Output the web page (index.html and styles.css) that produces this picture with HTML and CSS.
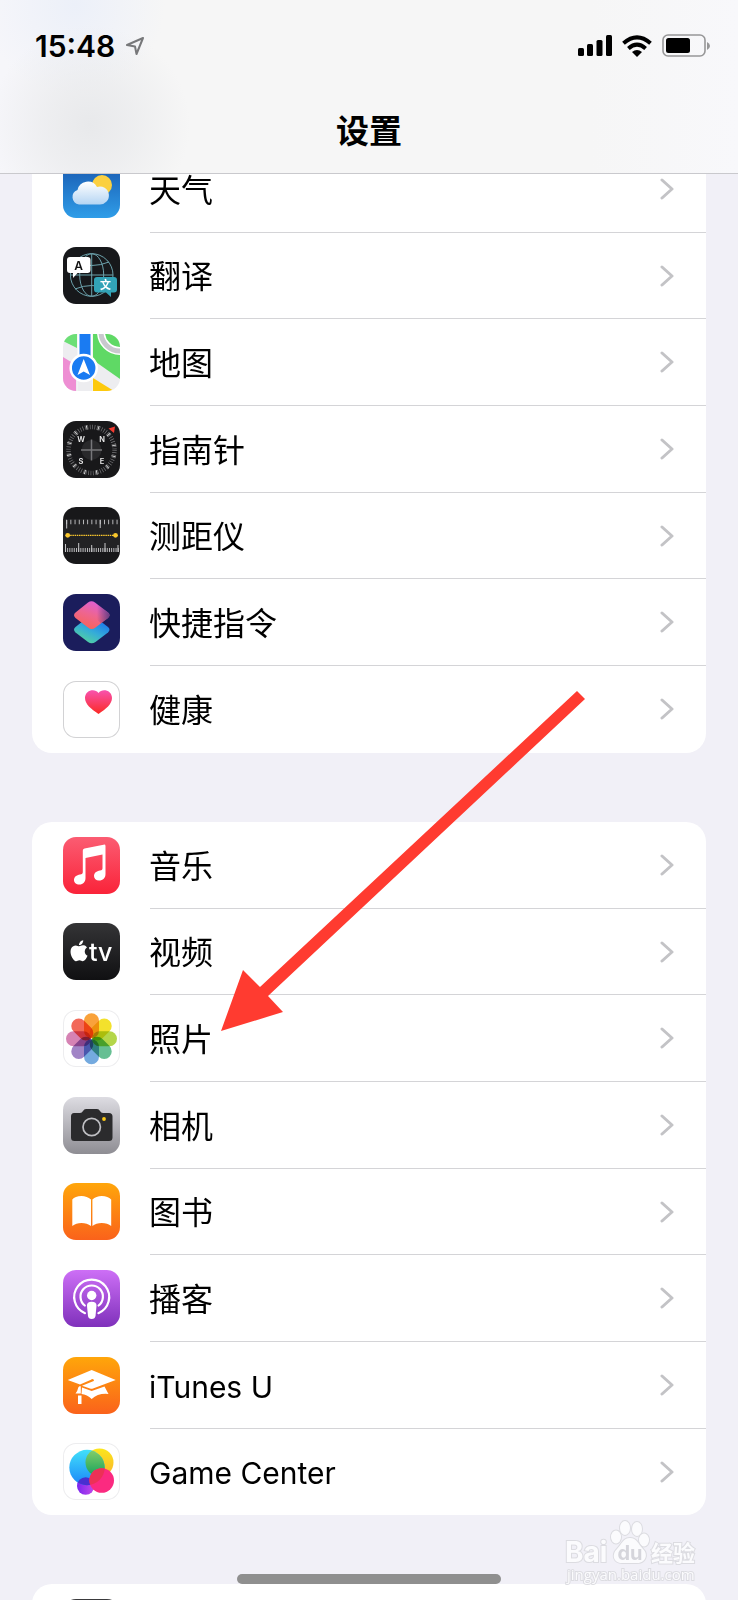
FILE: index.html
```html
<!DOCTYPE html>
<html lang="zh-CN">
<head>
  <meta charset="UTF-8">
  <meta name="viewport" content="width=device-width, initial-scale=1.0">
  <title>设置</title>
  <link rel="stylesheet" href="styles.css">
</head>
<body>
  <header class="header">
    <div class="status-bar">
      <div class="status-left">
        <span class="time">15:48</span>
        <svg width="20" height="20" viewBox="0 0 20 20" fill="none" stroke="#77787a" stroke-width="2" stroke-linejoin="round"><path d="M18 2 L2 9 L10 10.500 L11.500 18 Z"/></svg>
      </div>
      <div class="status-right">
        <svg width="34" height="22" viewBox="0 0 34 22"><rect x="0" y="13" width="6" height="8" rx="1.500"/><rect x="9" y="9" width="6" height="12" rx="1.500"/><rect x="18.500" y="5" width="6" height="16" rx="1.500"/><rect x="28" y="0" width="6" height="21" rx="1.500"/></svg>
        <svg width="30" height="22" viewBox="0 0 30 22"><g fill="none" stroke="#000" stroke-width="4"><path d="M1.500 8.200 Q15 -3.600 28.500 8.200"/><path d="M6.400 13.400 Q15 5.800 23.600 13.400"/></g><path d="M10 17 Q15 13 20 17 L15 22 Z"/></svg>
        <svg width="48" height="24" viewBox="0 0 48 24"><rect x="1" y="1" width="42" height="21" rx="5" fill="none" stroke="#979798" stroke-width="1.600"/><rect x="4" y="4" width="24" height="15" rx="2.500"/><path d="M45 8 Q48 9.500 48 12 Q48 14.500 45 16 Z" fill="#979798"/></svg>
      </div>
    </div>
    <h1>设置</h1>
  </header>

  <main class="settings">
    <nav class="group group-top">
      <a class="row" href="#">
        <svg class="icon" viewBox="0 0 57 57">
          <defs>
            <linearGradient id="sky" x2="0" y2="1"><stop offset="0" stop-color="#1857ae"/><stop offset="1" stop-color="#2f9de8"/></linearGradient>
            <linearGradient id="cloud" x2="0" y2="1"><stop offset="0" stop-color="#fff"/><stop offset="1" stop-color="#b5d5f3"/></linearGradient>
          </defs>
          <rect width="57" height="57" fill="url(#sky)"/>
          <circle cx="39" cy="24" r="10" fill="#fbd041"/>
          <path fill="url(#cloud)" d="M16 43.500 A7.500 7.500 0 0 1 14.500 29 A10.500 10.500 0 0 1 34 26 A9 9 0 1 1 36.500 43.500 Z"/>
        </svg>
        <span class="label">天气</span>
        <svg class="chevron" viewBox="0 0 14 22"><path d="M2 2 L12 11 L2 20"/></svg>
      </a>
      <a class="row" href="#">
        <svg class="icon" viewBox="0 0 57 57">
          <rect width="57" height="57" fill="#17181b"/>
          <g fill="none" stroke="#6da3ad" stroke-width="1">
            <circle cx="28.700" cy="28" r="21.300"/><ellipse cx="28.700" cy="28" rx="12" ry="21.300"/>
            <path d="M28.700 7 V49 M7.500 28 H50 M12 15 Q28.700 22 46 15 M12 42 Q28.700 35 46 42"/>
          </g>
          <path fill="#fff" d="M7 10 H24.500 Q27.500 10 27.500 13 V23 Q27.500 26 24.500 26 H14.500 L10 31 V26 H7 Q4 26 4 23 V13 Q4 10 7 10 Z"/>
          <path fill="#32a3b7" d="M34 30 H51 Q54 30 54 33 V42.500 Q54 45.500 51 45.500 H48 V50 L43 45.500 H34 Q31 45.500 31 42.500 V33 Q31 30 34 30 Z"/>
          <text class="glyph" x="15.500" y="22.500" font-size="12" fill="#111">A</text>
          <text class="glyph" x="42.500" y="42" font-size="11" fill="#fff">文</text>
        </svg>
        <span class="label">翻译</span>
        <svg class="chevron" viewBox="0 0 14 22"><path d="M2 2 L12 11 L2 20"/></svg>
      </a>
      <a class="row" href="#">
        <svg class="icon" viewBox="0 0 57 57">
          <rect width="57" height="57" fill="#ededf0"/>
          <path fill="#6cdf76" d="M0 0 H14 V14 L0 7 Z"/>
          <path fill="#5fd965" d="M30 0 H57 V45 L30 26 Z"/>
          <circle cx="57" cy="-2" r="19" fill="none" stroke="#fff" stroke-width="8"/>
          <circle cx="57" cy="-2" r="19" fill="none" stroke="#c9c9ce" stroke-width="5"/>
          <path fill="#ee8ed3" d="M0 23 L13 31 V57 H0 Z"/>
          <path fill="#fdc90d" d="M30 44 L51 57 H30 Z"/>
          <path fill="#fff" d="M14.500 0 H29.500 V57 H14.500 Z"/>
          <path fill="#ededf0" d="M14.500 34 H29.500 V57 H14.500 Z"/>
          <path fill="#1a7bf2" d="M16.500 0 H27.500 V30 H16.500 Z"/>
          <circle cx="20.700" cy="34" r="13" fill="#1a7bf2" stroke="#fff" stroke-width="2.500"/>
          <path fill="#fff" d="M20.700 25 L27 41 L20.700 37.500 L14.500 41 Z"/>
        </svg>
        <span class="label">地图</span>
        <svg class="chevron" viewBox="0 0 14 22"><path d="M2 2 L12 11 L2 20"/></svg>
      </a>
      <a class="row" href="#">
        <svg class="icon" viewBox="0 0 57 57">
          <rect width="57" height="57" fill="#18181a"/>
          <circle cx="28.500" cy="29" r="23" fill="none" stroke="#77777a" stroke-width="4.500" stroke-dasharray="0.700 1.709"/>
          <circle cx="28.500" cy="29" r="23" fill="none" stroke="#ddd" stroke-width="4.500" stroke-dasharray="0.900 11.143" stroke-dashoffset="-6"/>
          <circle cx="28.500" cy="29" r="10" fill="#29292b"/>
          <path d="M28.500 18.500 V39.500 M18 29 H39" stroke="#77777a" stroke-width="1.500"/>
          <path fill="#f63b30" d="M45.500 7.500 L52 5.500 L51 12 Z"/>
          <g class="glyph" font-size="7.500" fill="#eee"><text x="18" y="21">W</text><text x="39" y="21">N</text><text x="18" y="43">S</text><text x="39" y="43">E</text></g>
        </svg>
        <span class="label">指南针</span>
        <svg class="chevron" viewBox="0 0 14 22"><path d="M2 2 L12 11 L2 20"/></svg>
      </a>
      <a class="row" href="#">
        <svg class="icon" viewBox="0 0 57 57">
          <rect width="57" height="57" fill="#18181a"/>
          <rect y="12" width="57" height="33" fill="#222224"/>
          <g fill="none" stroke="#c9c9cb">
            <path stroke-width="4.500" stroke-dasharray="0.900 3.300" d="M3.200 15 H56"/>
            <path stroke-width="1" d="M3.700 13 V21.500 M37.200 13 V21"/>
            <path stroke-width="4" stroke-dasharray="0.900 1.300" d="M2 43 H56"/>
            <path stroke-width="1" d="M2.500 37 V45 M15.700 36 V45 M28.700 38 V45 M42 36 V45 M55 38 V45"/>
          </g>
          <path d="M5 28.300 H52" stroke="#fbc82d" stroke-width="1.300" stroke-dasharray="1.500 0.700"/>
          <circle cx="4.700" cy="28.300" r="2.400" fill="#fbc82d"/><circle cx="52.500" cy="28.300" r="2.400" fill="#fbc82d"/>
        </svg>
        <span class="label">测距仪</span>
        <svg class="chevron" viewBox="0 0 14 22"><path d="M2 2 L12 11 L2 20"/></svg>
      </a>
      <a class="row" href="#">
        <svg class="icon" viewBox="0 0 57 57">
          <defs>
            <linearGradient id="cutTop" x1="0.200" y1="0.900" x2="0.600" y2="0"><stop offset="0" stop-color="#f8635a"/><stop offset="0.500" stop-color="#ee6590"/><stop offset="1" stop-color="#dc5fd5"/></linearGradient>
            <linearGradient id="cutShade" x1="0.300" x2="1"><stop offset="0" stop-color="#5a3a80" stop-opacity="0"/><stop offset="1" stop-color="#5a3a80" stop-opacity="0.900"/></linearGradient>
            <linearGradient id="cutBottom" x1="0.300" y1="1" x2="0.800" y2="0.200"><stop offset="0" stop-color="#55d39d"/><stop offset="0.500" stop-color="#35acd8"/><stop offset="1" stop-color="#1b78ee"/></linearGradient>
          </defs>
          <rect width="57" height="57" fill="#1b1d5c"/>
          <path fill="url(#cutBottom)" d="M12.500 33 L25 23 Q28.500 20.500 32 23 L45 33 Q48 35.500 45 38.500 L32.500 48 Q28.500 50.500 25 48 L12.500 38.500 Q9.500 35.500 12.500 33 Z"/>
          <path fill="url(#cutTop)" d="M12.500 18.500 L25 8.500 Q28.500 6 32 8.500 L45 18.500 Q48 21 45 24 L32.500 33.500 Q28.500 36.500 25 33.500 L12.500 24 Q9.500 21 12.500 18.500 Z"/>
          <path fill="url(#cutShade)" d="M32 8.500 L45 18.500 Q48 21 45 24 L38 29.300 L28.500 21 Z"/>
        </svg>
        <span class="label">快捷指令</span>
        <svg class="chevron" viewBox="0 0 14 22"><path d="M2 2 L12 11 L2 20"/></svg>
      </a>
      <a class="row" href="#">
        <svg class="icon icon-outlined" viewBox="0 0 57 57">
          <defs><linearGradient id="heart" x2="0" y2="1"><stop offset="0" stop-color="#f852ae"/><stop offset="1" stop-color="#fb2a24"/></linearGradient></defs>
          <path fill="url(#heart)" d="M35.500 33 C28 28 22 23 22 17 C22 9 32 7 35.500 12 C39 7 49 9 49 17 C49 23 43 28 35.500 33 Z"/>
        </svg>
        <span class="label">健康</span>
        <svg class="chevron" viewBox="0 0 14 22"><path d="M2 2 L12 11 L2 20"/></svg>
      </a>
    </nav>

    <nav class="group">
      <a class="row" href="#">
        <svg class="icon" viewBox="0 0 57 57">
          <defs><linearGradient id="music" x2="0" y2="1"><stop offset="0" stop-color="#fb5c72"/><stop offset="1" stop-color="#fa2339"/></linearGradient></defs>
          <rect width="57" height="57" fill="url(#music)"/>
          <path fill="#fff" d="M42.500 9 V37 C42.500 41 40 43.500 36 43.500 C33 43.500 31 41.500 31 39 C31 36 33.500 34 37 33.500 C39 33.200 39.500 32.500 39.500 31 V17.500 L22.500 21 V41 C22.500 45 20 47.500 16.500 47.500 C13 47.500 11 45.500 11 43 C11 40 13.500 38 17 37.500 C19 37.200 19.800 36.500 19.800 35 V13.500 Q19.800 12 21.500 11.500 L40.500 7.700 Q42.500 7.200 42.500 9 Z"/>
        </svg>
        <span class="label">音乐</span>
        <svg class="chevron" viewBox="0 0 14 22"><path d="M2 2 L12 11 L2 20"/></svg>
      </a>
      <a class="row" href="#">
        <svg class="icon" viewBox="0 0 57 57">
          <defs><linearGradient id="tv" x2="0" y2="1"><stop offset="0" stop-color="#343436"/><stop offset="1" stop-color="#101012"/></linearGradient></defs>
          <rect width="57" height="57" fill="url(#tv)"/>
          <path fill="#fff" transform="translate(5.600 17.300) scale(0.870)" d="M12.152 6.896c-.948 0-2.415-1.078-3.960-1.040-2.040.027-3.910 1.183-4.961 3.014-2.117 3.675-.546 9.103 1.519 12.090 1.013 1.454 2.208 3.090 3.792 3.039 1.520-.065 2.090-.987 3.935-.987 1.831 0 2.350.987 3.960.948 1.637-.026 2.676-1.480 3.676-2.948 1.156-1.688 1.636-3.325 1.662-3.415-.039-.013-3.182-1.221-3.220-4.857-.026-3.040 2.480-4.494 2.597-4.559-1.429-2.090-3.623-2.324-4.390-2.376-2-.156-3.675 1.090-4.610 1.090zM15.530 3.830c.843-1.012 1.400-2.427 1.245-3.830-1.207.052-2.662.805-3.532 1.818-.780.896-1.454 2.338-1.273 3.714 1.338.104 2.715-.688 3.559-1.701"/>
          <text class="tv-text" x="26" y="37.500">tv</text>
        </svg>
        <span class="label">视频</span>
        <svg class="chevron" viewBox="0 0 14 22"><path d="M2 2 L12 11 L2 20"/></svg>
      </a>
      <a class="row" href="#">
        <svg class="icon icon-light" viewBox="0 0 57 57">
          <g class="petals" transform="translate(28.500 28.700)">
            <rect x="-7.500" y="-25.500" width="15" height="25" rx="7.500" fill="#f9a23b"/>
            <rect x="-7.500" y="-25.500" width="15" height="25" rx="7.500" fill="#f3e12c" transform="rotate(45)"/>
            <rect x="-7.500" y="-25.500" width="15" height="25" rx="7.500" fill="#b4d64a" transform="rotate(90)"/>
            <rect x="-7.500" y="-25.500" width="15" height="25" rx="7.500" fill="#66bf93" transform="rotate(135)"/>
            <rect x="-7.500" y="-25.500" width="15" height="25" rx="7.500" fill="#74aadf" transform="rotate(180)"/>
            <rect x="-7.500" y="-25.500" width="15" height="25" rx="7.500" fill="#a184c6" transform="rotate(225)"/>
            <rect x="-7.500" y="-25.500" width="15" height="25" rx="7.500" fill="#d683b4" transform="rotate(270)"/>
            <rect x="-7.500" y="-25.500" width="15" height="25" rx="7.500" fill="#f2695a" transform="rotate(315)"/>
          </g>
        </svg>
        <span class="label">照片</span>
        <svg class="chevron" viewBox="0 0 14 22"><path d="M2 2 L12 11 L2 20"/></svg>
      </a>
      <a class="row" href="#">
        <svg class="icon" viewBox="0 0 57 57">
          <defs><linearGradient id="camera" x2="0" y2="1"><stop offset="0" stop-color="#dddce2"/><stop offset="1" stop-color="#8e8d93"/></linearGradient></defs>
          <rect width="57" height="57" fill="url(#camera)"/>
          <path fill="#2b2b2d" d="M11 16 H17 Q19 16 20 14 Q21 12 23 12 H34 Q36 12 37 14 Q38 16 40 16 H46 Q49.500 16 49.500 19.500 V40.500 Q49.500 44 46 44 H11.500 Q8 44 8 40.500 V19.500 Q8 16 11 16 Z"/>
          <circle cx="28.700" cy="30" r="8.700" fill="none" stroke="#bfbfc3" stroke-width="1.700"/>
          <circle cx="41" cy="22" r="1.900" fill="#fcc914"/>
        </svg>
        <span class="label">相机</span>
        <svg class="chevron" viewBox="0 0 14 22"><path d="M2 2 L12 11 L2 20"/></svg>
      </a>
      <a class="row" href="#">
        <svg class="icon" viewBox="0 0 57 57">
          <defs><linearGradient id="orange" x2="0" y2="1"><stop offset="0" stop-color="#ffa60a"/><stop offset="1" stop-color="#fa621b"/></linearGradient></defs>
          <rect width="57" height="57" fill="url(#orange)"/>
          <path fill="#fff" d="M28 16.500 Q24 13 18.500 13 Q12 13 9.300 16.500 V43 Q13 40 18.500 40 Q24 40 28 43 Z M29.400 16.500 Q33 13 38.800 13 Q45 13 48.200 16.500 V43 Q44.500 40 38.800 40 Q33 40 29.400 43 Z"/>
        </svg>
        <span class="label">图书</span>
        <svg class="chevron" viewBox="0 0 14 22"><path d="M2 2 L12 11 L2 20"/></svg>
      </a>
      <a class="row" href="#">
        <svg class="icon" viewBox="0 0 57 57">
          <defs><linearGradient id="podcast" x2="0" y2="1"><stop offset="0" stop-color="#cd6ff6"/><stop offset="1" stop-color="#7f31bb"/></linearGradient></defs>
          <rect width="57" height="57" fill="url(#podcast)"/>
          <g fill="none" stroke="#fff" stroke-width="2.200" stroke-linecap="round">
            <path d="M22 43.200 A17.500 17.500 0 1 1 35.400 43.200"/>
            <path d="M21.800 35.500 A11.200 11.200 0 1 1 35.600 35.500"/>
          </g>
          <circle cx="28.700" cy="25.500" r="4.700" fill="#fff"/>
          <path fill="#fff" d="M28.700 31.800 C32 31.800 33.700 33 33.500 36 L32.500 46 Q32 49 28.700 49 Q25.400 49 25 46 L24 36 C23.800 33 25.400 31.800 28.700 31.800 Z"/>
        </svg>
        <span class="label">播客</span>
        <svg class="chevron" viewBox="0 0 14 22"><path d="M2 2 L12 11 L2 20"/></svg>
      </a>
      <a class="row" href="#">
        <svg class="icon" viewBox="0 0 57 57">
          <rect width="57" height="57" fill="url(#orange)"/>
          <path fill="#fff" d="M4.700 23 L28.700 13 L52.700 23 L30 31.500 Q28.500 32 27 31.500 L19 28.700 L29.500 24.500 A1.600 1.200 0 1 0 28 22.700 L17 27.500 Z"/>
          <path fill="#fff" d="M19 30.500 L28.700 34 L41.500 29.500 L45.500 37 Q35 36 28.700 42 Q24 37.500 18.500 37 Z M17 29 L17.800 29.500 V36.500 H12.500 Q14.500 34 15.500 30 Z M15 38.500 H18.500 V47 H15 Z"/>
        </svg>
        <span class="label label-latin">iTunes U</span>
        <svg class="chevron" viewBox="0 0 14 22"><path d="M2 2 L12 11 L2 20"/></svg>
      </a>
      <a class="row" href="#">
        <svg class="icon icon-light" viewBox="0 0 57 57">
          <defs>
            <linearGradient id="gcBlue" x2="0" y2="1"><stop offset="0" stop-color="#42e0fa"/><stop offset="1" stop-color="#1a86f9"/></linearGradient>
            <linearGradient id="gcYellow" x2="0" y2="1"><stop offset="0" stop-color="#fbe61d"/><stop offset="1" stop-color="#fbb32b"/></linearGradient>
            <linearGradient id="gcGreen" x2="0" y2="1"><stop offset="0" stop-color="#8bd06a"/><stop offset="1" stop-color="#14a25c"/></linearGradient>
            <linearGradient id="gcPurple"><stop offset="0" stop-color="#7a25f0"/><stop offset="1" stop-color="#c34be8"/></linearGradient>
            <clipPath id="gcClip"><circle cx="24" cy="24.500" r="17.700"/></clipPath>
          </defs>
          <circle cx="22.700" cy="43" r="8.700" fill="url(#gcPurple)"/>
          <circle cx="36.500" cy="19.500" r="14" fill="url(#gcYellow)"/>
          <circle cx="24" cy="24.500" r="17.700" fill="url(#gcBlue)"/>
          <g clip-path="url(#gcClip)"><circle cx="36.500" cy="19.500" r="14" fill="url(#gcGreen)"/><circle cx="22.700" cy="43" r="8.700" fill="#482fd0"/></g>
          <circle cx="38.700" cy="37.500" r="12.300" fill="#fb2a80"/>
          <g clip-path="url(#gcClip)"><circle cx="38.700" cy="37.500" r="12.300" fill="#ec3156"/></g>
        </svg>
        <span class="label label-latin">Game Center</span>
        <svg class="chevron" viewBox="0 0 14 22"><path d="M2 2 L12 11 L2 20"/></svg>
      </a>
    </nav>

    <nav class="group">
      <a class="row" href="#" aria-label="App">
        <svg class="icon" viewBox="0 0 57 57"><rect width="57" height="57" fill="#3a3a3c"/></svg>
      </a>
    </nav>
  </main>

  <svg class="arrow" viewBox="0 0 364 340"><path fill="#ff3b30" d="M356 0 L364 8 L47 305 L62 321 L0 340 L22 279 L39 296 Z"/></svg>

  <svg class="watermark" viewBox="0 0 136 68">
    <g fill="#fbfbfd" stroke="#dcdce1" stroke-width="2" paint-order="stroke">
      <text class="brand" x="0" y="44">Bai</text>
      <ellipse cx="51" cy="19" rx="5" ry="6.500"/><ellipse cx="60" cy="10" rx="5" ry="7"/><ellipse cx="72" cy="11" rx="5" ry="7"/><ellipse cx="79" cy="22" rx="5" ry="6.500"/>
      <path d="M65 20 C72 20 73 26 78 31 C84 37 80 45 72 45 H57 C49 45 46 37 52 31 C57 26 58 20 65 20 Z"/>
      <text class="brand-cn" x="86" y="43">经验</text>
      <text class="site" x="2" y="62">jingyan.baidu.com</text>
    </g>
    <text class="du" x="65" y="42">du</text>
  </svg>
  <div class="home-indicator"></div>
</body>
</html>
```
FILE: styles.css
```css
* {
  box-sizing: border-box;
}
body {
  margin: 0;
  height: 100vh;
  overflow: hidden;
  position: relative;
  background-color: #f1f0f7;
  color: #000;
  font-family: Inter, "Noto Sans CJK SC", sans-serif;
}
.header {
  position: relative;
  z-index: 1;
  height: 174px;
  padding-top: 29px;
  border-bottom: 1px solid #c9c9cd;
  background:
    radial-gradient(circle at 90px 125px, #e8e9eb, rgba(232, 233, 235, 0.6) 45px, rgba(232, 233, 235, 0) 100px),
    radial-gradient(circle at 75px 5px, #ecf0f9, rgba(236, 240, 249, 0) 90px),
    linear-gradient(90deg, #f6f6fa, #f6f6f6 20%, #f6f6f6 80%, #f8f8fb);
}
.status-bar {
  display: flex;
  justify-content: space-between;
  height: 34px;
  padding: 0 28px 0 35px;
}
.status-left,
.status-right {
  display: flex;
  align-items: center;
  gap: 10px;
}
.time {
  font-size: 30px;
  font-weight: 600;
  line-height: 34px;
}
h1 {
  margin: 44px 0 0;
  font-size: 33px;
  font-weight: 700;
  line-height: 48px;
  text-align: center;
}
.settings {
  display: flex;
  flex-direction: column;
  gap: 69px;
  padding: 0 32px;
}
.group {
  border-radius: 20px;
  background-color: #fff;
}
/* first group is scrolled under the header */
.group-top {
  margin-top: -28px;
}
.row {
  display: flex;
  align-items: center;
  height: 87px;
  padding: 0 0 1px 31px;
  color: inherit;
  text-decoration: none;
  background: linear-gradient(#d4d4d7, #d4d4d7) 118px 100% / 100% 1px no-repeat;
}
.row:nth-child(3n + 2) {
  height: 86px;
}
.row:last-child {
  background: none;
}
.icon {
  width: 57px;
  height: 57px;
  flex-shrink: 0;
  border-radius: 13px;
}
.icon-outlined {
  box-shadow: inset 0 0 0 1px #d2d2d4;
}
.icon-light {
  box-shadow: inset 0 0 0 1px #ededef;
}
.label {
  flex: 1;
  margin-left: 29px;
  padding-top: 3px;
  font-size: 32px;
  line-height: 44px;
}
.label-latin {
  font-size: 30px;
}
.chevron {
  width: 14px;
  height: 22px;
  margin-right: 32px;
  fill: none;
  stroke: #c3c3c6;
  stroke-width: 3;
  stroke-linecap: round;
  stroke-linejoin: round;
}
.glyph {
  font-weight: 600;
  text-anchor: middle;
}
.tv-text {
  fill: #fff;
  font-size: 25px;
  font-weight: 500;
}
.petals {
  isolation: isolate;
}
.petals rect {
  mix-blend-mode: multiply;
}
.arrow {
  position: absolute;
  top: 691px;
  left: 221px;
  width: 364px;
  height: 340px;
}
.home-indicator {
  position: absolute;
  bottom: 16px;
  left: 50%;
  width: 264px;
  height: 10px;
  margin-left: -132px;
  border-radius: 5px;
  background-color: #8f8f8f;
}
.watermark {
  position: absolute;
  right: 37px;
  bottom: 14px;
  width: 136px;
  height: 68px;
}
.brand {
  font-size: 28px;
  font-weight: 700;
}
.brand-cn {
  font-size: 22px;
  font-weight: 700;
}
.site {
  font-family: "Open Sans", sans-serif;
  font-size: 15px;
}
.du {
  fill: #d5d5db;
  font-size: 20px;
  font-weight: 700;
  text-anchor: middle;
}
```
